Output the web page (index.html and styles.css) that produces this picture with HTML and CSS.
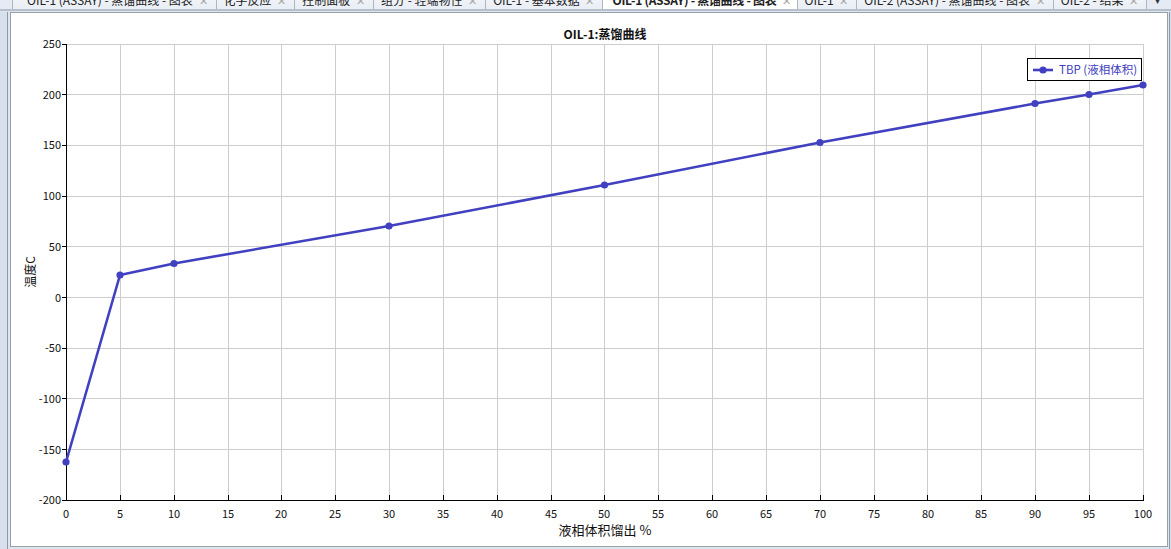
FILE: index.html
```html
<!DOCTYPE html>
<html>
<head>
<meta charset="utf-8">
<link rel="stylesheet" href="styles.css">
</head>
<body>
<div class="app">
  <div class="tabstrip">
    <div class="tabs">
      <div class="tab first">OIL-1 (ASSAY) - 蒸馏曲线 - 图表 <span class="x">✕</span></div>
      <div class="tab">化学反应 <span class="x">✕</span></div>
      <div class="tab">控制面板 <span class="x">✕</span></div>
      <div class="tab">组分 - 轻端物性 <span class="x">✕</span></div>
      <div class="tab">OIL-1 - 基本数据 <span class="x">✕</span></div>
      <div class="tab active">OIL-1 (ASSAY) - 蒸馏曲线 - 图表 <span class="x">✕</span></div>
      <div class="tab">OIL-1 <span class="x">✕</span></div>
      <div class="tab">OIL-2 (ASSAY) - 蒸馏曲线 - 图表 <span class="x">✕</span></div>
      <div class="tab">OIL-2 - 结果 <span class="x">✕</span></div>
      <div class="more">▾</div>
    </div>
  </div>
  <div class="body-row">
    <div class="side"></div>
    <div class="panel">
      <svg class="chart" width="1156" height="533" viewBox="11 13 1156 533" xmlns="http://www.w3.org/2000/svg">
        <g class="grid">
          <line x1="66" y1="44.5" x2="1143" y2="44.5"/>
          <line x1="66" y1="94.5" x2="1143" y2="94.5"/>
          <line x1="66" y1="145.5" x2="1143" y2="145.5"/>
          <line x1="66" y1="196.5" x2="1143" y2="196.5"/>
          <line x1="66" y1="246.5" x2="1143" y2="246.5"/>
          <line x1="66" y1="297.5" x2="1143" y2="297.5"/>
          <line x1="66" y1="348.5" x2="1143" y2="348.5"/>
          <line x1="66" y1="398.5" x2="1143" y2="398.5"/>
          <line x1="66" y1="449.5" x2="1143" y2="449.5"/>
          <line x1="120.5" y1="44" x2="120.5" y2="500"/>
          <line x1="174.5" y1="44" x2="174.5" y2="500"/>
          <line x1="228.5" y1="44" x2="228.5" y2="500"/>
          <line x1="281.5" y1="44" x2="281.5" y2="500"/>
          <line x1="335.5" y1="44" x2="335.5" y2="500"/>
          <line x1="389.5" y1="44" x2="389.5" y2="500"/>
          <line x1="443.5" y1="44" x2="443.5" y2="500"/>
          <line x1="497.5" y1="44" x2="497.5" y2="500"/>
          <line x1="551.5" y1="44" x2="551.5" y2="500"/>
          <line x1="604.5" y1="44" x2="604.5" y2="500"/>
          <line x1="658.5" y1="44" x2="658.5" y2="500"/>
          <line x1="712.5" y1="44" x2="712.5" y2="500"/>
          <line x1="766.5" y1="44" x2="766.5" y2="500"/>
          <line x1="820.5" y1="44" x2="820.5" y2="500"/>
          <line x1="874.5" y1="44" x2="874.5" y2="500"/>
          <line x1="927.5" y1="44" x2="927.5" y2="500"/>
          <line x1="981.5" y1="44" x2="981.5" y2="500"/>
          <line x1="1035.5" y1="44" x2="1035.5" y2="500"/>
          <line x1="1089.5" y1="44" x2="1089.5" y2="500"/>
          <line x1="1143.5" y1="44" x2="1143.5" y2="500"/>
        </g>
        <g class="axis">
          <line x1="66.5" y1="44" x2="66.5" y2="501"/>
          <line x1="66" y1="500.5" x2="1144" y2="500.5"/>
          <path d="M62 44.5h4M62 94.5h4M62 145.5h4M62 196.5h4M62 246.5h4M62 297.5h4M62 348.5h4M62 398.5h4M62 449.5h4M62 500.5h4"/>
          <path d="M120.5 500v-5M174.5 500v-5M228.5 500v-5M281.5 500v-5M335.5 500v-5M389.5 500v-5M443.5 500v-5M497.5 500v-5M551.5 500v-5M604.5 500v-5M658.5 500v-5M712.5 500v-5M766.5 500v-5M820.5 500v-5M874.5 500v-5M927.5 500v-5M981.5 500v-5M1035.5 500v-5M1089.5 500v-5M1143.5 500v-5"/>
        </g>
        <g class="ylab">
          <text x="61" y="48">250</text>
          <text x="61" y="99">200</text>
          <text x="61" y="149">150</text>
          <text x="61" y="200">100</text>
          <text x="61" y="251">50</text>
          <text x="61" y="302">0</text>
          <text x="61" y="352">-50</text>
          <text x="61" y="403">-100</text>
          <text x="61" y="454">-150</text>
          <text x="61" y="504">-200</text>
        </g>
        <g class="xlab">
          <text x="66" y="518">0</text>
          <text x="120" y="518">5</text>
          <text x="174" y="518">10</text>
          <text x="228" y="518">15</text>
          <text x="281" y="518">20</text>
          <text x="335" y="518">25</text>
          <text x="389" y="518">30</text>
          <text x="443" y="518">35</text>
          <text x="497" y="518">40</text>
          <text x="551" y="518">45</text>
          <text x="604" y="518">50</text>
          <text x="658" y="518">55</text>
          <text x="712" y="518">60</text>
          <text x="766" y="518">65</text>
          <text x="820" y="518">70</text>
          <text x="874" y="518">75</text>
          <text x="928" y="518">80</text>
          <text x="981" y="518">85</text>
          <text x="1035" y="518">90</text>
          <text x="1089" y="518">95</text>
          <text x="1143" y="518">100</text>
        </g>
        <text class="title" x="605" y="39">OIL-1:蒸馏曲线</text>
        <text class="xtitle" x="605" y="535">液相体积馏出 %</text>
        <text class="ytitle" x="0" y="0" transform="translate(35 272) rotate(-90)">温度C</text>
        <polyline class="series" points="66,462 120,275 174,263.5 389,226 604.5,185 820,142.5 1035,103.5 1089,94.5 1143,85"/>
        <g class="dots">
          <circle cx="66" cy="462" r="3.6"/>
          <circle cx="120" cy="275" r="3.6"/>
          <circle cx="174" cy="263.5" r="3.6"/>
          <circle cx="389" cy="226" r="3.6"/>
          <circle cx="604.5" cy="185" r="3.6"/>
          <circle cx="820" cy="142.5" r="3.6"/>
          <circle cx="1035" cy="103.5" r="3.6"/>
          <circle cx="1089" cy="94.5" r="3.6"/>
          <circle cx="1143" cy="85" r="3.6"/>
        </g>
        <rect class="legend" x="1027.5" y="58.5" width="114" height="22"/>
        <line class="series" x1="1033" y1="70" x2="1053" y2="70"/>
        <circle class="dot" cx="1043" cy="70" r="3.6"/>
        <text class="legtext" x="1059" y="74">TBP (液相体积)</text>
      </svg>
    </div>
    <div class="rside"></div>
  </div>
</div>
</body>
</html>
```

FILE: styles.css
```css
html, body {
  margin: 0;
  padding: 0;
}
body {
  width: 1171px;
  height: 549px;
  overflow: hidden;
  background: #dde5f0;
  font-family: "Noto Sans CJK SC", "Liberation Sans", sans-serif;
}
.app {
  display: flex;
  flex-direction: column;
  width: 1171px;
  height: 549px;
}
.tabstrip {
  flex-shrink: 0;
  height: 9px;
  overflow: hidden;
  border-bottom: 2px solid #b7bfca;
  background: #e4ebf4;
}
.tabs {
  display: flex;
  margin-top: -9px;
  padding-left: 12px;
  height: 18px;
}
.tab {
  font-size: 12px;
  line-height: 18px;
  color: #222;
  padding: 0 8px 0 7px;
  border-right: 1px solid #aeb6c2;
  background: linear-gradient(#f6f8fb, #e9eef5);
  white-space: nowrap;
}
.tab.first {
  padding-left: 14px;
  border-left: 1px solid #aeb6c2;
}
.tab.active {
  font-weight: bold;
  background: #ffffff;
  padding-left: 9px;
  padding-right: 6px;
  letter-spacing: -0.3px;
}
.x {
  color: #a8a8a8;
  font-weight: normal;
  font-size: 11px;
  margin-left: 3px;
}
.more {
  font-size: 10px;
  line-height: 18px;
  color: #333;
  margin-left: 8px;
}
.body-row {
  display: flex;
  flex: 1;
  padding-top: 1px;
}
.side {
  width: 7px;
  border-right: 1px solid #8e99aa;
  background: #d7e0ec;
}
.panel {
  flex-shrink: 0;
  margin-left: 2px;
  margin-bottom: 2px;
  border: 1px solid #9aa0a8;
  background: #ffffff;
  width: 1156px;
  height: 533px;
}
.rside {
  flex: 1;
  border-left: 1px solid #8e99aa;
  margin-left: 1px;
  background: #d7e0ec;
}
.chart {
  display: block;
  font-family: "Noto Sans CJK SC", "Liberation Sans", sans-serif;
}
.grid line {
  stroke: #cdcdcd;
  stroke-width: 1;
}
.axis line, .axis path {
  stroke: #000;
  stroke-width: 1;
  fill: none;
}
.ylab text {
  font-size: 11px;
  text-anchor: end;
  fill: #111;
}
.xlab text {
  font-size: 11px;
  text-anchor: middle;
  fill: #111;
}
.title {
  font-size: 12px;
  font-weight: bold;
  text-anchor: middle;
  fill: #111;
}
.xtitle {
  font-size: 13px;
  text-anchor: middle;
  fill: #111;
}
.ytitle {
  font-size: 12px;
  text-anchor: middle;
  fill: #111;
}
.series {
  fill: none;
  stroke: #4040c0;
  stroke-width: 2.6;
  stroke-linejoin: round;
}
.dots circle, .dot {
  fill: #4040c0;
}
.legend {
  fill: #fff;
  stroke: #000;
  stroke-width: 1;
}
.legtext {
  font-size: 11.5px;
  fill: #4040c0;
}
```
